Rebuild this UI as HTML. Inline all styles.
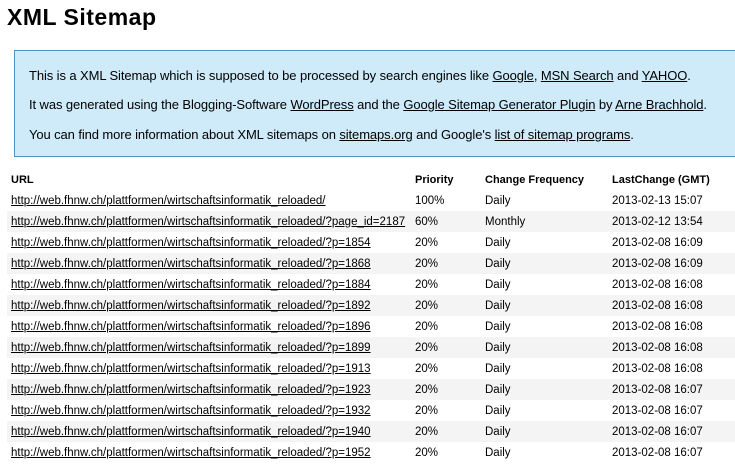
<!DOCTYPE html>
<html><head><meta charset="utf-8"><style>
body{margin:0;background:#fff;font-family:"Liberation Sans",sans-serif;color:#000;width:735px;height:464px;overflow:hidden;position:relative}
h1{position:absolute;left:7px;top:4px;margin:0;font-size:23px;font-weight:bold;letter-spacing:0.5px}
.box{position:absolute;left:14px;top:50px;width:740px;height:105px;background:#cfeaf8;border:1px solid #4f93c7;}
.box p{position:absolute;left:14px;margin:0;font-size:13px;white-space:nowrap;letter-spacing:-0.1px}
a{color:#000;text-decoration:underline}
table{position:absolute;left:7px;top:169px;border-collapse:collapse;font-size:11.5px;white-space:nowrap;table-layout:fixed;width:741px}
td,th{height:21px;padding:0 0 0 4px;text-align:left;vertical-align:middle;overflow:hidden}
th{font-weight:bold;font-size:11px}
tr:nth-child(odd) td{background:#f4f4f4}
tr:first-child td{background:none}
</style></head><body>
<h1>XML Sitemap</h1>
<div class="box">
<p style="top:17px">This is a XML Sitemap which is supposed to be processed by search engines like <a>Google</a>, <a>MSN Search</a> and <a>YAHOO</a>.</p>
<p style="top:46px">It was generated using the Blogging-Software <a>WordPress</a> and the <a>Google Sitemap Generator Plugin</a> by <a>Arne Brachhold</a>.</p>
<p style="top:76px">You can find more information about XML sitemaps on <a>sitemaps.org</a> and Google's <a>list of sitemap programs</a>.</p>
</div>
<table>
<colgroup><col style="width:404px"><col style="width:70px"><col style="width:127px"><col style="width:140px"></colgroup>
<tr><th>URL</th><th>Priority</th><th>Change Frequency</th><th>LastChange (GMT)</th></tr>
<tr><td><a>http://web.fhnw.ch/plattformen/wirtschaftsinformatik_reloaded/</a></td><td>100%</td><td>Daily</td><td>2013-02-13 15:07</td></tr>
<tr><td><a>http://web.fhnw.ch/plattformen/wirtschaftsinformatik_reloaded/?page_id=2187</a></td><td>60%</td><td>Monthly</td><td>2013-02-12 13:54</td></tr>
<tr><td><a>http://web.fhnw.ch/plattformen/wirtschaftsinformatik_reloaded/?p=1854</a></td><td>20%</td><td>Daily</td><td>2013-02-08 16:09</td></tr>
<tr><td><a>http://web.fhnw.ch/plattformen/wirtschaftsinformatik_reloaded/?p=1868</a></td><td>20%</td><td>Daily</td><td>2013-02-08 16:09</td></tr>
<tr><td><a>http://web.fhnw.ch/plattformen/wirtschaftsinformatik_reloaded/?p=1884</a></td><td>20%</td><td>Daily</td><td>2013-02-08 16:08</td></tr>
<tr><td><a>http://web.fhnw.ch/plattformen/wirtschaftsinformatik_reloaded/?p=1892</a></td><td>20%</td><td>Daily</td><td>2013-02-08 16:08</td></tr>
<tr><td><a>http://web.fhnw.ch/plattformen/wirtschaftsinformatik_reloaded/?p=1896</a></td><td>20%</td><td>Daily</td><td>2013-02-08 16:08</td></tr>
<tr><td><a>http://web.fhnw.ch/plattformen/wirtschaftsinformatik_reloaded/?p=1899</a></td><td>20%</td><td>Daily</td><td>2013-02-08 16:08</td></tr>
<tr><td><a>http://web.fhnw.ch/plattformen/wirtschaftsinformatik_reloaded/?p=1913</a></td><td>20%</td><td>Daily</td><td>2013-02-08 16:08</td></tr>
<tr><td><a>http://web.fhnw.ch/plattformen/wirtschaftsinformatik_reloaded/?p=1923</a></td><td>20%</td><td>Daily</td><td>2013-02-08 16:07</td></tr>
<tr><td><a>http://web.fhnw.ch/plattformen/wirtschaftsinformatik_reloaded/?p=1932</a></td><td>20%</td><td>Daily</td><td>2013-02-08 16:07</td></tr>
<tr><td><a>http://web.fhnw.ch/plattformen/wirtschaftsinformatik_reloaded/?p=1940</a></td><td>20%</td><td>Daily</td><td>2013-02-08 16:07</td></tr>
<tr><td><a>http://web.fhnw.ch/plattformen/wirtschaftsinformatik_reloaded/?p=1952</a></td><td>20%</td><td>Daily</td><td>2013-02-08 16:07</td></tr>
</table>
</body></html>
